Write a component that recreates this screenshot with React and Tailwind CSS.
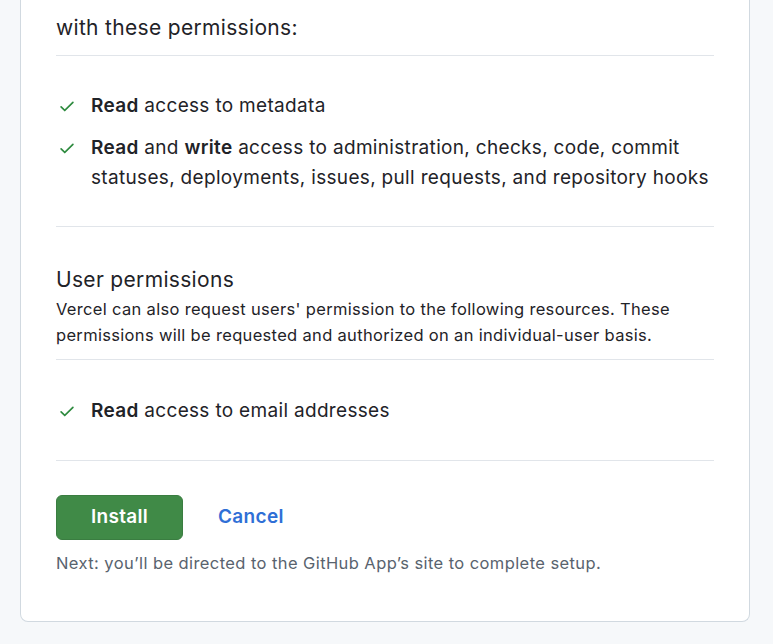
function Check() {
  return (
    <svg viewBox="0 0 16 16" className="h-[18px] w-[18px] shrink-0 fill-[#2d8a3e]" aria-hidden>
      <path d="M13.78 4.22a.75.75 0 0 1 0 1.06l-7.25 7.25a.75.75 0 0 1-1.06 0L2.22 9.28a.751.751 0 0 1 .018-1.042.751.751 0 0 1 1.042-.018L6 10.94l6.72-6.72a.75.75 0 0 1 1.06 0Z" />
    </svg>
  );
}

function Item({ children }) {
  return (
    <li className="flex items-start gap-[15px]">
      <span className="flex h-[30px] items-center pl-[2px]">
        <Check />
      </span>
      <span>{children}</span>
    </li>
  );
}

export default function App() {
  return (
    <main
      className="min-h-[644px] bg-[#f6f8fa] pl-[20px] pr-[23px] pb-[22px] text-[#1f2328] tracking-[0.02em]"
      style={{ fontFamily: "Inter, 'Liberation Sans', sans-serif" }}
    >
      <div className="rounded-b-lg border border-t-0 border-[#d1d9e0] bg-white px-[35px] pb-[47px] pt-[14px]">
        {/* heading */}
        <h2 className="text-[21px] leading-[28px] pb-[13px]">with these permissions:</h2>
        <hr className="border-[#e1e5ea]" />

        <ul className="flex flex-col gap-[12px] pt-[35px] pb-[33px] text-[19px] leading-[30px]">
          <Item>
            <b className="font-semibold">Read</b> access to metadata
          </Item>
          <Item>
            <b className="font-semibold">Read</b> and <b className="font-semibold">write</b> access to administration, checks, code, commit
            <br />
            statuses, deployments, issues, pull requests, and repository hooks
          </Item>
        </ul>
        <hr className="border-[#e1e5ea]" />

        {/* user permissions */}
        <h3 className="pt-[39px] text-[21px] leading-[28px]">User permissions</h3>
        <p className="pt-[2px] pb-[11px] text-[16.5px] leading-[26px]">
          Vercel can also request users' permission to the following resources. These
          <br />
          permissions will be requested and authorized on an individual-user basis.
        </p>
        <hr className="border-[#e1e5ea]" />

        <ul className="pt-[36px] pb-[34px] text-[19px] leading-[30px]">
          <Item>
            <b className="font-semibold">Read</b> access to email addresses
          </Item>
        </ul>
        <hr className="border-[#e1e5ea]" />

        <div className="flex items-center gap-[35px] pt-[34px]">
          <button className="h-[45px] w-[127px] rounded-md border border-[#3a7d41] bg-[#408a47] text-[19px] font-semibold text-white">
            Install
          </button>
          <a className="text-[19px] font-semibold text-[#2f6fd6]">Cancel</a>
        </div>
        <p className="pt-[12px] text-[16.5px] leading-[22px] tracking-[0.025em] text-[#59636e]">
          Next: you’ll be directed to the GitHub App’s site to complete setup.
        </p>
      </div>
    </main>
  );
}
